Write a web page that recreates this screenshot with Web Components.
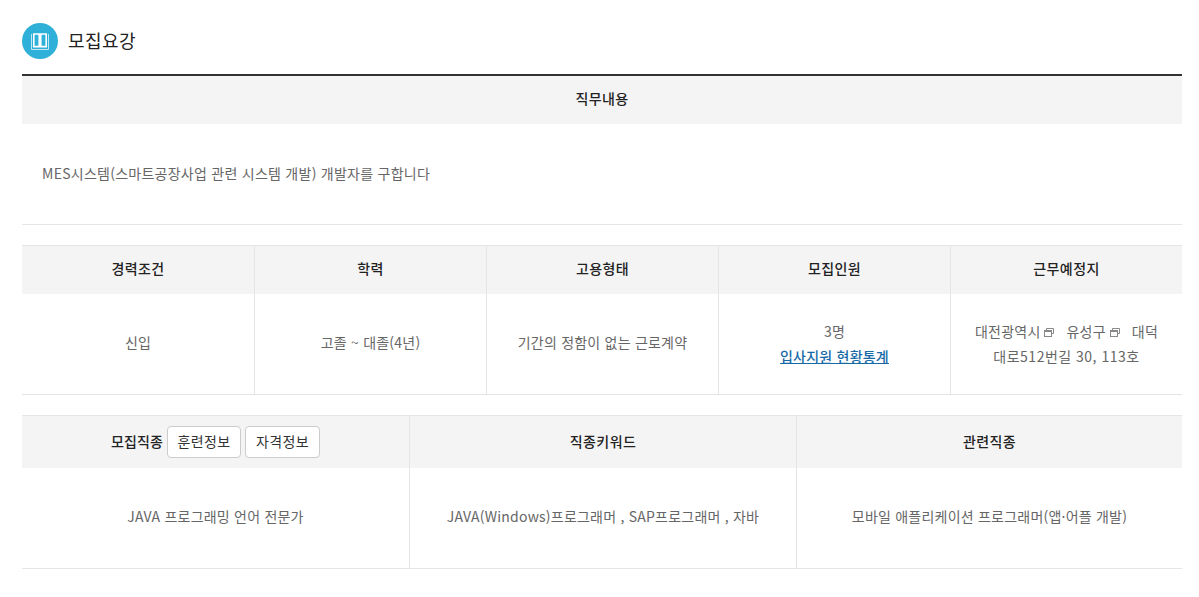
<!DOCTYPE html>
<html lang="ko"><head><meta charset="utf-8">
<style>
html,body{margin:0;background:#fff}
body{font-family:"Noto Sans CJK KR","Noto Sans",sans-serif;font-size:14px;color:#666;letter-spacing:.22px}
</style></head><body>
<x-page>
<x-title>모집요강</x-title>
<x-table top cols="1">
<x-cell head>직무내용</x-cell>
<x-cell left>MES시스템(스마트공장사업 관련 시스템 개발) 개발자를 구합니다</x-cell>
</x-table>
<x-table cols="5">
<x-cell head>경력조건</x-cell><x-cell head>학력</x-cell><x-cell head>고용형태</x-cell><x-cell head>모집인원</x-cell><x-cell head>근무예정지</x-cell>
<x-cell>신입</x-cell><x-cell>고졸 ~ 대졸(4년)</x-cell><x-cell>기간의 정함이 없는 근로계약</x-cell>
<x-cell two><div>3명</div><x-link>입사지원 현황통계</x-link></x-cell>
<x-cell two><x-addr></x-addr></x-cell>
</x-table>
<x-table tall cols="3" tracks="387px 387px 1fr">
<x-cell head><x-label>모집직종</x-label><x-btn>훈련정보</x-btn><x-btn wide>자격정보</x-btn></x-cell><x-cell head>직종키워드</x-cell><x-cell head>관련직종</x-cell>
<x-cell>JAVA 프로그래밍 언어 전문가</x-cell><x-cell>JAVA(Windows)프로그래머 , SAP프로그래머 , 자바</x-cell><x-cell>모바일 애플리케이션 프로그래머(앱·어플 개발)</x-cell>
</x-table>
</x-page>
<script>
function def(name,html,init){customElements.define(name,class extends HTMLElement{constructor(){super();this.attachShadow({mode:'open'}).innerHTML=html;}connectedCallback(){init&&init(this)}})}
def('x-page',`<style>:host{display:flex;flex-direction:column;gap:20px;padding:23px 17px 28px 22px}</style><slot></slot>`);
def('x-title',`<style>:host{display:flex;align-items:center;gap:10px;height:36px;margin-bottom:-5px;font-size:18px;color:#222;letter-spacing:.4px}
span{padding-bottom:2px}
i{width:36px;height:36px;border-radius:50%;background:#2fb0d9;display:flex;align-items:center;justify-content:center}
</style><i><svg width="18" height="17" viewBox="0 0 18 17" fill="none"><path d="M.5 1v15.5h17V1" stroke="#bfe6f2"/><path d="M2.8 1h5.4v12.6H2.8zM9.8 1h5.4v12.6H9.8z" stroke="#fff" stroke-width="1.6"/></svg></i><span><slot></slot></span>`);
def('x-table',`<style>:host{display:grid;border-top:1px solid #e5e5e5;grid-auto-rows:auto}
:host([top]){border-top:2px solid #333}
</style><slot></slot>`,el=>{el.style.gridTemplateColumns=el.getAttribute('tracks')||`repeat(${el.getAttribute('cols')},1fr)`;
[...el.children].forEach((c,i)=>{const n=+el.getAttribute('cols');if(i%n)c.setAttribute('lined','');if(el.hasAttribute('tall'))c.setAttribute('tall','')})});
def('x-cell',`<style>:host{display:flex;flex-direction:column;align-items:center;justify-content:center;min-height:101px;box-sizing:border-box;border-bottom:1px solid #e5e5e5;text-align:center;line-height:25px;padding:0 20px 3px}
:host([two]){padding-bottom:1px}
:host([lined]){border-left:1px solid #e5e5e5}
:host([left]){align-items:flex-start;padding-bottom:1px;letter-spacing:.26px}
:host([head]){flex-direction:row;min-height:48px;height:48px;background:#f4f4f4;border-bottom:0;color:#222;font-weight:500;white-space:nowrap;padding-bottom:3px;letter-spacing:.4px}
:host([head][tall]){min-height:52px;height:52px;padding-bottom:1px}
</style><slot></slot>`);
def('x-label',`<style>:host{display:inline;letter-spacing:.15px}</style><slot></slot>`);
def('x-link',`<style>:host{display:inline;color:#176aa8;font-weight:500;text-decoration:underline}</style><slot></slot>`);
def('x-btn',`<style>:host{display:inline-flex;align-items:center;justify-content:center;box-sizing:border-box;height:32px;width:74px;margin-left:4px;border:1px solid #ccc;border-radius:4px;background:#fff;color:#333;font-weight:400}
:host([wide]){width:75px}</style><slot></slot>`);
const pop=`<svg width="10" height="9" viewBox="0 0 10 9" style="margin:0 0 0 4px" fill="none" stroke="#888"><path d="M2.5 2.5V.5h7v5h-2"/><rect x=".5" y="2.5" width="7" height="6" fill="#fff"/><path d="M1 3.5h6"/></svg>`;
def('x-addr',`<style>:host{display:block;line-height:25px;white-space:nowrap}span{margin-left:12px}b{font-weight:400;letter-spacing:.5px}</style>대전광역시${pop}<span>유성구</span>${pop}<span>대덕</span><br><b>대로512번길 30, 113호</b>`);
</script>
</body></html>
